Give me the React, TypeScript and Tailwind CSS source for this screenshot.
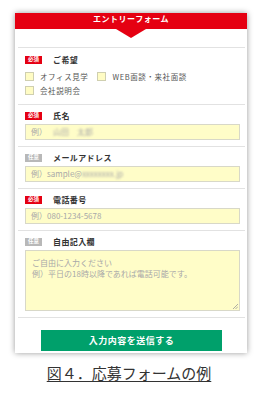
import type { ReactNode } from "react";

const Badge = ({ required }: { required: boolean }) => (
  <span
    className={`flex h-[8px] w-[17px] items-center justify-center text-[5.5px] font-bold leading-none text-white ${
      required ? "bg-[#e50012]" : "bg-[#b8b8b8]"
    }`}
  >
    {required ? "必須" : "任意"}
  </span>
);

function Section({
  label,
  required,
  children,
}: {
  label: string;
  required: boolean;
  children: ReactNode;
}) {
  return (
    <div className="border-b border-[#e2e2e2] pl-[7px] pr-[5px] pt-[6px] pb-[6px]">
      <div className="flex h-[10px] items-center gap-[11px]">
        <Badge required={required} />
        <span className="text-[8px] font-bold leading-none tracking-[0.4px] text-[#333]">{label}</span>
      </div>
      {children}
    </div>
  );
}

const Check = ({ label }: { label: string }) => (
  <div className="flex items-center gap-[6px]">
    <span className="h-[9px] w-[9px] border border-[#cfcfb0] bg-[#fffcc4]" />
    <span className="text-[7.5px] leading-none tracking-[0.6px] text-[#555]">{label}</span>
  </div>
);

const Field = ({ children }: { children: ReactNode }) => (
  <div className="mt-[3px] flex h-[16px] items-center border border-[#d8d8c8] bg-[#fffdc8] px-[5px] text-[8px] leading-none text-[#a8a8a8]">
    {children}
  </div>
);

export default function App() {
  return (
    <div className="min-h-[400px] bg-white pt-[13px] font-['Noto_Sans_CJK_JP','Noto_Sans',sans-serif]">
      <div className="ml-[15px] w-[232px] bg-white shadow-[0_0_6px_rgba(0,0,0,0.4)]">
        <div className="flex h-[16px] justify-center bg-[#e50012] pt-[2px]">
          <span className="text-[8px] font-bold leading-none tracking-[0.5px] text-white">
            エントリーフォーム
          </span>
        </div>
        <div className="flex h-[18px] justify-center">
          <svg width="30" height="9" viewBox="0 0 30 9">
            <polygon points="0,0 30,0 15,9" fill="#e50012" />
          </svg>
        </div>
        <div className="ml-[3px] mr-[2px] border-t border-[#e2e2e2]">
          <div className="border-b border-[#e2e2e2] pl-[7px] pr-[5px] pt-[7px] pb-[9px]">
            <div className="flex h-[10px] items-center gap-[11px]">
              <Badge required />
              <span className="text-[8px] font-bold leading-none tracking-[0.4px] text-[#333]">ご希望</span>
            </div>
            <div className="mt-[7px] flex gap-[9px]">
              <Check label="オフィス見学" />
              <Check label="WEB面談・来社面談" />
            </div>
            <div className="mt-[5px] flex">
              <Check label="会社説明会" />
            </div>
          </div>

          <Section label="氏名" required>
            <Field>
              <span>例）</span>
              <span className="ml-[6px] blur-[1.2px]">山田　太郎</span>
            </Field>
          </Section>

          <Section label="メールアドレス" required={false}>
            <Field>
              <span>例）sample@</span>
              <span className="blur-[1.2px]">xxxxxxxx.jp</span>
            </Field>
          </Section>

          <Section label="電話番号" required>
            <Field>
              <span>例）080-1234-5678</span>
            </Field>
          </Section>

          <Section label="自由記入欄" required={false}>
            <div className="relative mt-[3px] h-[61px] border border-[#d8d8c8] bg-[#fffdc8] px-[6px] pt-[6px] text-[8px] leading-[11px] text-[#a8a8a8]">
              <div>ご自由に入力ください</div>
              <div>例）平日の18時以降であれば電話可能です。</div>
              <svg className="absolute bottom-[1px] right-[1px]" width="5" height="5" viewBox="0 0 5 5">
                <path d="M5 0 L0 5 M5 2.5 L2.5 5" stroke="#999" strokeWidth="0.8" />
              </svg>
            </div>
          </Section>

          <div className="pt-[12px] pb-[2px]">
            <div className="mx-auto flex h-[21px] w-[181px] items-center justify-center bg-[#00a06b] text-[9px] font-bold tracking-[0.5px] text-white">
              入力内容を送信する
            </div>
          </div>
        </div>
      </div>
      <div className="mt-[12px] flex justify-center">
        <span className="text-[15px] leading-[16px] text-[#333] underline decoration-[1px] underline-offset-[2px]">
          図４．応募フォームの例
        </span>
      </div>
    </div>
  );
}
